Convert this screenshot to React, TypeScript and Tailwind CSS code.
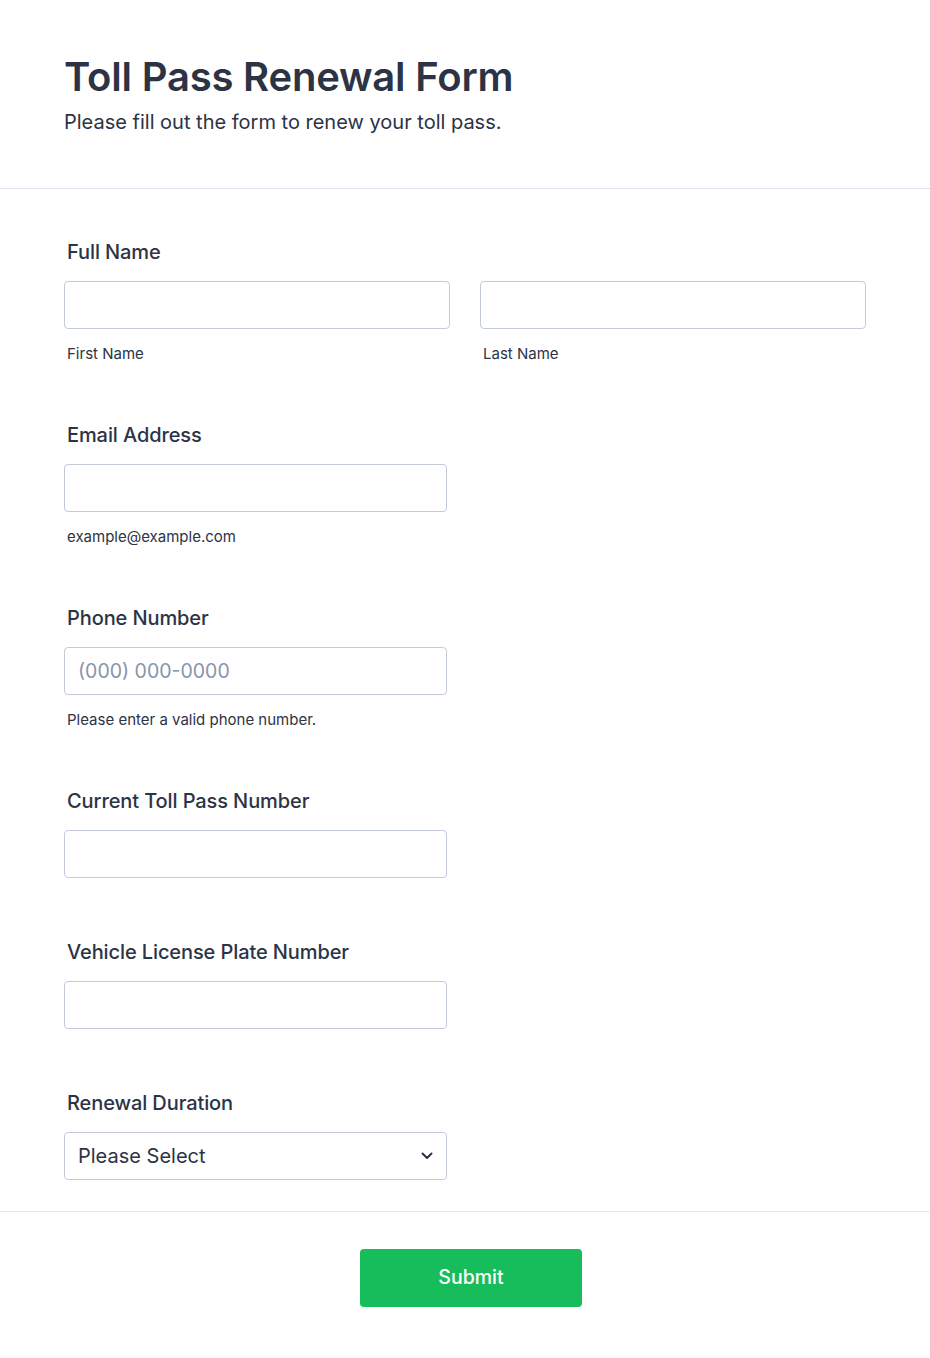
import React from "react";

const font = { fontFamily: "Inter, 'Noto Sans', sans-serif" };

function Label({ children }: { children: React.ReactNode }) {
  return (
    <div className="pl-[3px] text-[20px] leading-[24px] font-medium text-[#2c3345] tracking-[-0.1px]">{children}</div>
  );
}

function Input({ placeholder, className = "" }: { placeholder?: string; className?: string }) {
  return (
    <input
      placeholder={placeholder}
      className={`h-[48px] rounded-[4px] border border-[#c3cad8] bg-white px-[13px] text-[19.5px] text-[#2c3345] placeholder:text-[#8894ab] outline-none ${className}`}
    />
  );
}

function Sub({ children }: { children: React.ReactNode }) {
  return <div className="mt-[15px] pl-[3px] text-[15px] leading-[20px] text-[#2c3345]">{children}</div>;
}

export default function App() {
  return (
    <div style={font} className="min-h-[1358px] w-full bg-white">
      <div className="px-[64px] pt-[53px] pb-[54px] border-b border-[#dfe1ec]">
        <h1 className="text-[40px] leading-[48px] font-semibold text-[#2c3345] tracking-[-0.2px]">Toll Pass Renewal Form</h1>
        <p className="mt-[9px] text-[20px] leading-[24px] text-[#2c3345]">Please fill out the form to renew your toll pass.</p>
      </div>

      <div className="px-[64px] pt-[51px] pb-[31px] flex flex-col">
        <div className="flex flex-col">
          <Label>Full Name</Label>
          <div className="mt-[17px] flex gap-[30px]">
            <div className="flex flex-col w-[386px]">
              <Input className="w-[386px]" />
              <Sub>First Name</Sub>
            </div>
            <div className="flex flex-col w-[386px]">
              <Input className="w-[386px]" />
              <Sub>Last Name</Sub>
            </div>
          </div>
        </div>

        <div className="mt-[59px] flex flex-col">
          <Label>Email Address</Label>
          <Input className="mt-[17px] w-[383px]" />
          <Sub>example@example.com</Sub>
        </div>

        <div className="mt-[59px] flex flex-col">
          <Label>Phone Number</Label>
          <Input className="mt-[17px] w-[383px]" placeholder="(000) 000-0000" />
          <Sub>Please enter a valid phone number.</Sub>
        </div>

        <div className="mt-[59px] flex flex-col">
          <Label>Current Toll Pass Number</Label>
          <Input className="mt-[17px] w-[383px]" />
        </div>

        <div className="mt-[62px] flex flex-col">
          <Label>Vehicle License Plate Number</Label>
          <Input className="mt-[17px] w-[383px]" />
        </div>

        <div className="mt-[62px] flex flex-col">
          <Label>Renewal Duration</Label>
          <div className="mt-[17px] relative w-[383px] h-[48px] rounded-[4px] border border-[#c3cad8] bg-white flex items-center px-[13px]">
            <span className="text-[20px] text-[#2c3345]">Please Select</span>
            <svg className="absolute right-[13px] top-1/2 -translate-y-1/2" width="12" height="8" viewBox="0 0 12 8" fill="none">
              <path d="M1.5 1.5L6 6L10.5 1.5" stroke="#2c3345" strokeWidth="2" strokeLinecap="round" strokeLinejoin="round" />
            </svg>
          </div>
        </div>
      </div>

      <div className="border-t border-[#e6e8f0] pt-[37px] flex">
        <button className="ml-[360px] w-[222px] h-[58px] rounded-[4px] bg-[#18bd5b] text-white text-[19.5px] font-medium">
          Submit
        </button>
      </div>
    </div>
  );
}
